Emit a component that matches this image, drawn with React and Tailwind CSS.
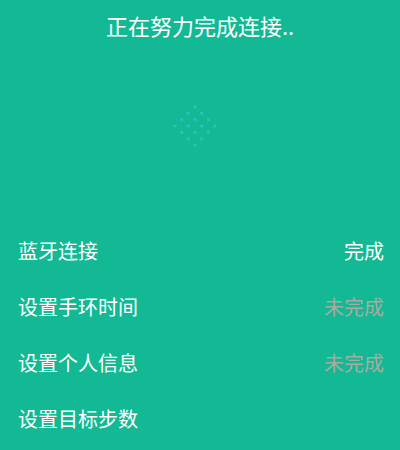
const rows = [
    { label: "蓝牙连接", status: "完成", done: true },
    { label: "设置手环时间", status: "未完成", done: false },
    { label: "设置个人信息", status: "未完成", done: false },
    { label: "设置目标步数", status: "", done: false },
];

function Dots() {
    const dots = [];
    for (let r = -3; r <= 3; r++) {
        const n = 4 - Math.abs(r);
        for (let k = 0; k < n; k++) {
            dots.push({ x: 25 + (k - (n - 1) / 2) * 13.33, y: 25 + r * 6.4 });
        }
    }
    return (
        <svg width="50" height="50" viewBox="0 0 50 50">
            {dots.map((d, i) => (
                <circle key={i} cx={d.x} cy={d.y} r="1.6" fill="#22c6c2" />
            ))}
        </svg>
    );
}

export default function App() {
    return (
        <div
            className="w-[400px] h-[450px] bg-[#13b994] text-white flex flex-col overflow-hidden"
            style={{ fontFamily: '"Noto Sans CJK SC", "Noto Sans", sans-serif' }}
        >
            {/* header */}
            <div className="h-[50px] flex items-center justify-center">
                <span className="text-[22px]">正在努力完成连接..</span>
            </div>

            {/* loading dots */}
            <div className="h-[173px] pt-[51px] pl-[170px]">
                <Dots />
            </div>

            {/* steps */}
            <div className="flex flex-col">
                {rows.map((row) => (
                    <div key={row.label} className="h-14 flex items-center justify-between pl-[18px] pr-[16px]">
                        <span className="text-[20px]">{row.label}</span>
                        <span className={row.done ? "text-[20px] text-white" : "text-[20px] text-[#a9aba2]"}>
                            {row.status}
                        </span>
                    </div>
                ))}
            </div>
        </div>
    );
}
